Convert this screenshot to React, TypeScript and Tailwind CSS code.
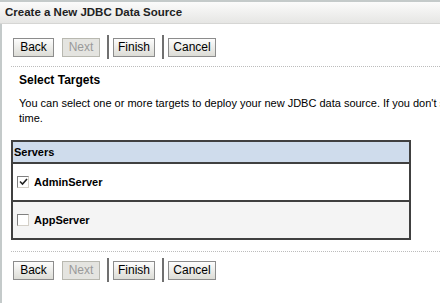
import React from 'react';

const font = { fontFamily: '"Liberation Sans", Arial, sans-serif' };

function Btn({ label, disabled = false }: { label: string; disabled?: boolean }) {
  return (
    <div
      className={`h-[19px] flex items-center justify-center text-[12px] leading-none border ${
        disabled
          ? 'border-[#b8b8b0] bg-[#e4e4e0] text-[#9a9a9a]'
          : 'border-[#8c8c8c] bg-gradient-to-b from-[#fdfdfd] to-[#dcdcd6] text-black'
      }`}
    >
      {label}
    </div>
  );
}

function ButtonBar() {
  return (
    <div className="flex items-center h-[24px] pl-[11px]">
      <div className="w-[41px]"><Btn label="Back" /></div>
      <div className="w-[38px] ml-[8px]"><Btn label="Next" disabled /></div>
      <div className="w-[2px] h-[24px] bg-[#707070] ml-[7px]" />
      <div className="w-[42px] ml-[4px]"><Btn label="Finish" /></div>
      <div className="w-[2px] h-[24px] bg-[#707070] ml-[7px]" />
      <div className="w-[48px] ml-[4px]"><Btn label="Cancel" /></div>
    </div>
  );
}

function Check({ checked }: { checked: boolean }) {
  return (
    <div className="w-[12px] h-[12px] border border-t-[#808080] border-l-[#808080] border-r-[#d4d0c8] border-b-[#d4d0c8] bg-white flex items-center justify-center">
      {checked && (
        <svg width="9" height="8" viewBox="0 0 9 8">
          <path d="M1 3.5 L3.5 6 L8 1" stroke="#222" strokeWidth="1.6" fill="none" />
        </svg>
      )}
    </div>
  );
}

export default function App() {
  return (
    <div className="w-[440px] h-[303px] overflow-hidden bg-white relative" style={font}>
      <div className="h-[24px] border-t-2 border-[#c4caca] border-b border-b-[#d6d6d4] bg-gradient-to-b from-[#fbfbfb] to-[#e6e6e4] flex items-center pl-[5px]">
        <span className="font-bold text-[11.5px] text-[#222]">Create a New JDBC Data Source</span>
      </div>
      <div className="border-l-2 border-[#c4caca] h-[279px]">
        <div className="pt-[11px]">
          <ButtonBar />
        </div>
        <div className="mt-[7px] ml-[9px] border-t border-dotted border-[#bcbcbc]" />
        <div className="pl-[17px] pt-[6px]">
          <div className="font-bold text-[12px] text-black leading-[14px]">Select Targets</div>
          <div className="mt-[9px] text-[11px] leading-[15px] text-black whitespace-nowrap">
            <div>You can select one or more targets to deploy your new JDBC data source. If you don't select a target, the data source will be created but not deployed.</div>
            <div>time.</div>
          </div>
        </div>
        <div className="ml-[9px] mt-[14px] w-[400px] border-2 border-[#404040]">
          <div className="h-[22px] bg-[#cfdcec] flex items-center pl-[1px] border-b-2 border-[#404040]">
            <span className="font-bold text-[11px] text-black">Servers</span>
          </div>
          <div className="h-[38px] bg-white flex items-center pl-[4px] gap-[5px] border-b-2 border-[#404040]">
            <Check checked />
            <span className="font-bold text-[11px] text-black">AdminServer</span>
          </div>
          <div className="h-[36px] bg-[#f4f4f4] flex items-center pl-[4px] gap-[5px]">
            <Check checked={false} />
            <span className="font-bold text-[11px] text-black">AppServer</span>
          </div>
        </div>
        <div className="mt-[11px] ml-[9px] border-t border-dotted border-[#bcbcbc]" />
        <div className="pt-[6px]">
          <ButtonBar />
        </div>
      </div>
    </div>
  );
}
